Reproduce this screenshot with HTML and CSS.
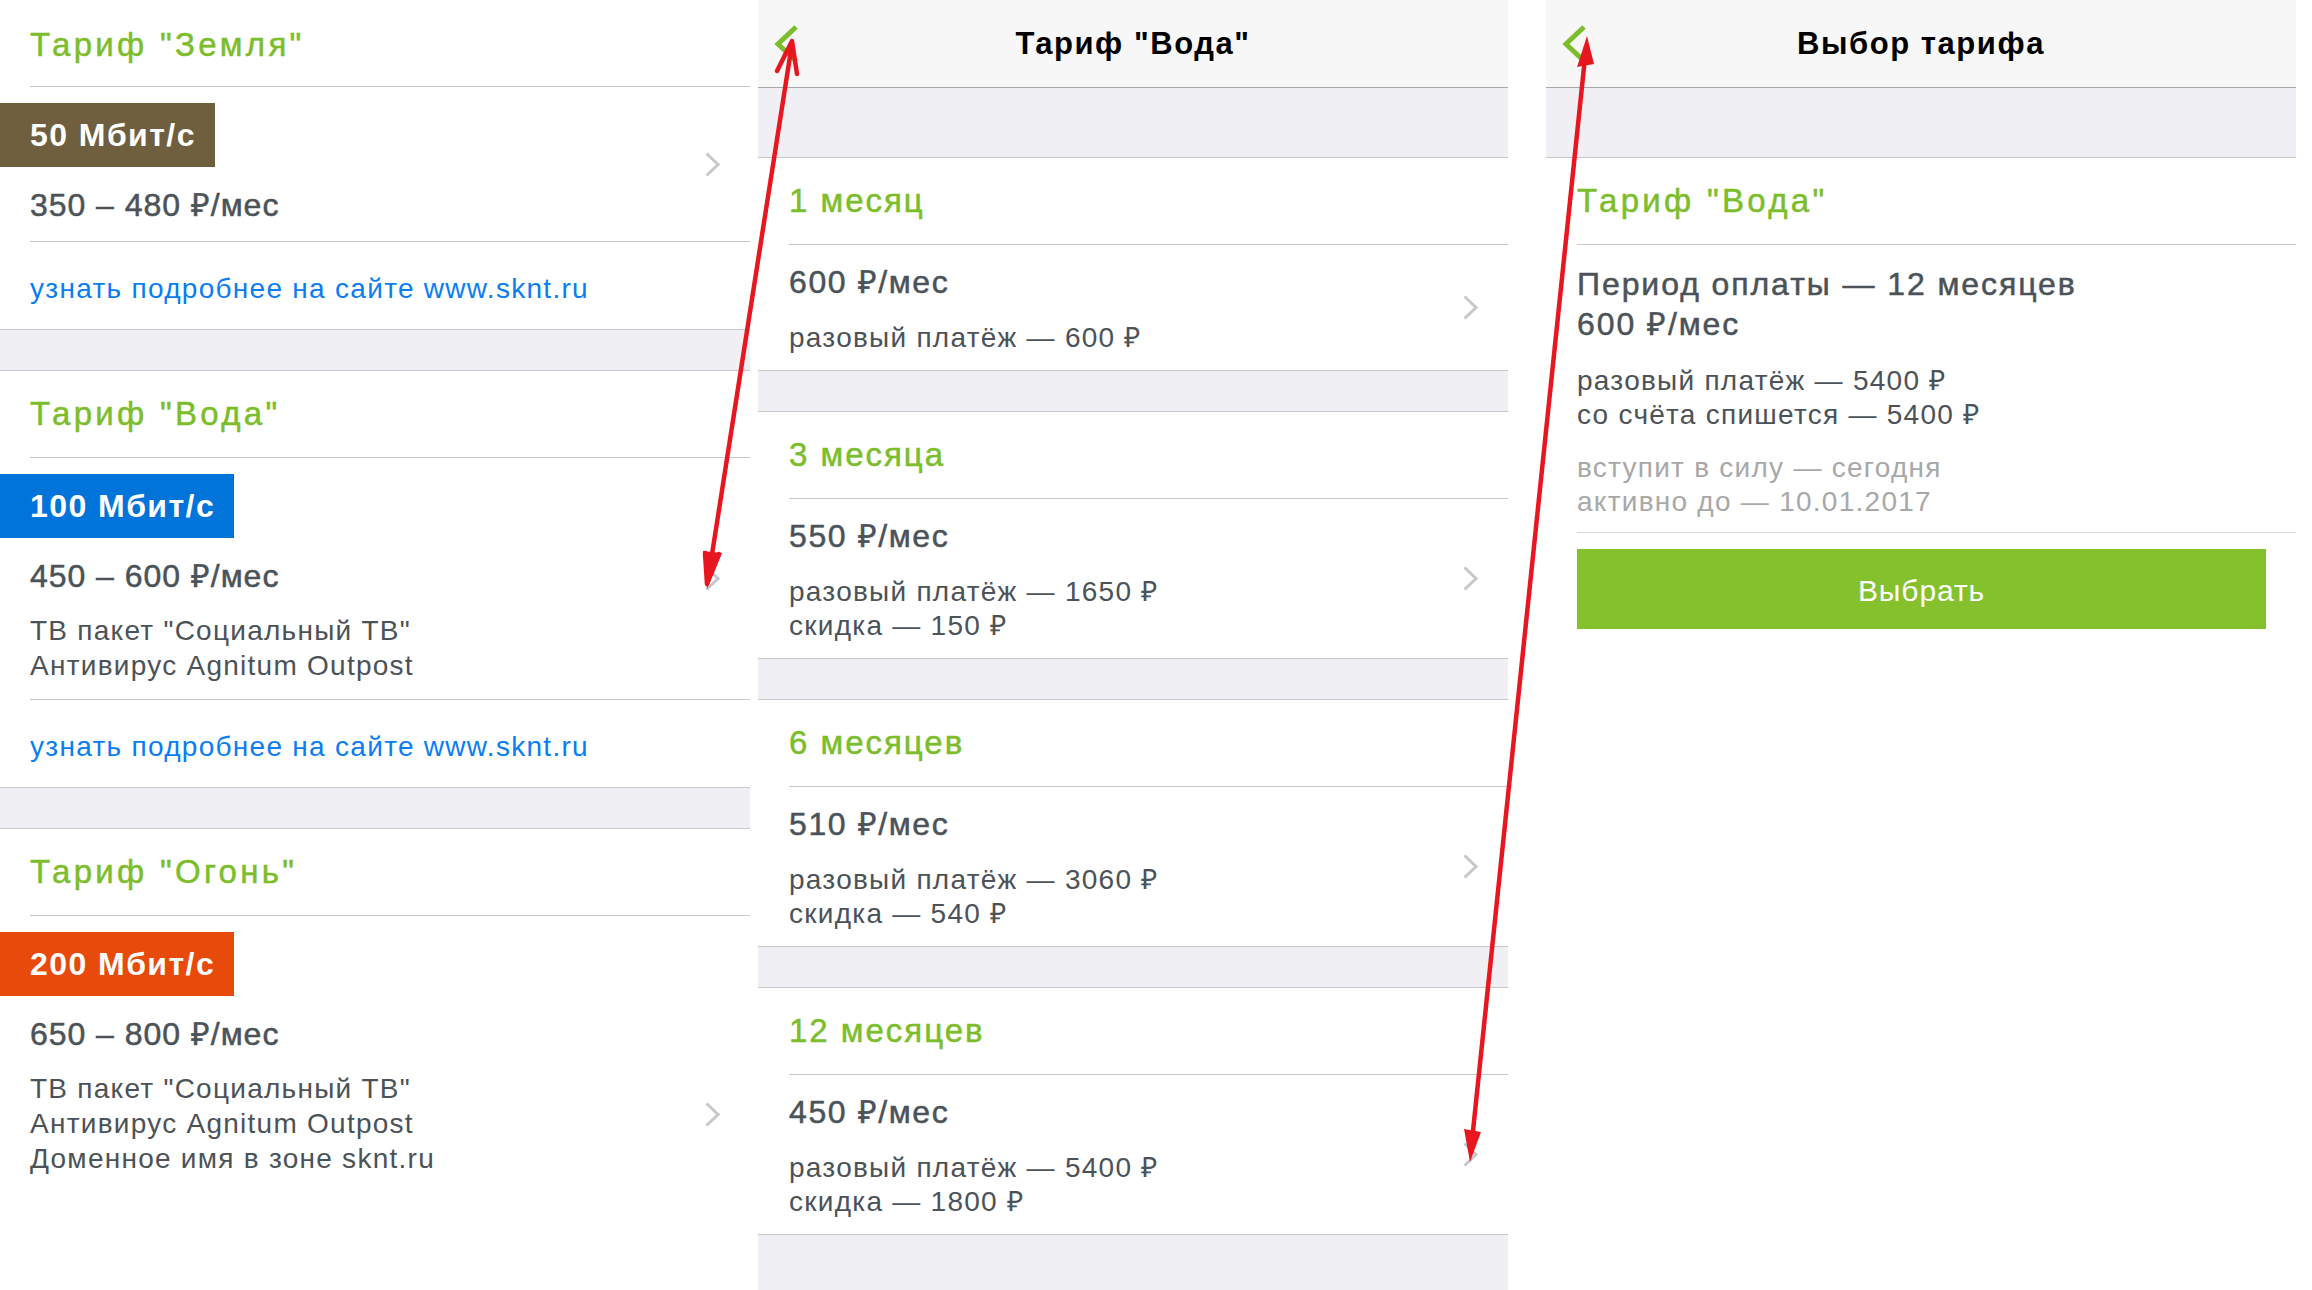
FILE: index.html
```html
<!DOCTYPE html>
<html lang="ru">
<head>
<meta charset="utf-8">
<title>Тарифы</title>
<link rel="stylesheet" href="styles.css">
</head>
<body>
<div class="screens">
  <!-- Screen 1: tariff list -->
  <section class="panel panel-list">
    <div class="group-title tariff-name tariff-first">Тариф "Земля"</div>
    <div class="sep"></div>
    <div class="row">
      <div class="row-body">
        <div class="badge badge-earth">50 Мбит/с</div>
        <div class="price">350 – 480 ₽/мес</div>
      </div>
      <svg class="chev" viewBox="0 0 15 25" width="15" height="25"><polyline points="1.5,1.5 13,12.5 1.5,23.5"/></svg>
    </div>
    <div class="sep"></div>
    <div class="link-row">узнать подробнее на сайте www.sknt.ru</div>
    <div class="band"></div>

    <div class="group-title tariff-name">Тариф "Вода"</div>
    <div class="sep"></div>
    <div class="row">
      <div class="row-body">
        <div class="badge badge-water">100 Мбит/с</div>
        <div class="price">450 – 600 ₽/мес</div>
        <div class="features">ТВ пакет "Социальный ТВ"<br>Антивирус Agnitum Outpost</div>
      </div>
      <svg class="chev" viewBox="0 0 15 25" width="15" height="25"><polyline points="1.5,1.5 13,12.5 1.5,23.5"/></svg>
    </div>
    <div class="sep"></div>
    <div class="link-row">узнать подробнее на сайте www.sknt.ru</div>
    <div class="band"></div>

    <div class="group-title tariff-name">Тариф "Огонь"</div>
    <div class="sep"></div>
    <div class="row row-tall">
      <div class="row-body">
        <div class="badge badge-fire">200 Мбит/с</div>
        <div class="price">650 – 800 ₽/мес</div>
        <div class="features">ТВ пакет "Социальный ТВ"<br>Антивирус Agnitum Outpost<br>Доменное имя в зоне sknt.ru</div>
      </div>
      <svg class="chev" viewBox="0 0 15 25" width="15" height="25"><polyline points="1.5,1.5 13,12.5 1.5,23.5"/></svg>
    </div>
  </section>

  <!-- Screen 2: payment periods -->
  <section class="panel panel-periods">
    <header class="navbar">
      <svg class="back" viewBox="0 0 26 40" width="26" height="40"><polyline points="22,3 4,20 22,37"/></svg>
      <h1 class="nav-title">Тариф "Вода"</h1>
      <span class="nav-spacer"></span>
    </header>
    <div class="band band-top"></div>

    <div class="group-title">1 месяц</div>
    <div class="sep"></div>
    <div class="row period-row">
      <div class="row-body">
        <div class="price">600 ₽/мес</div>
        <div class="small">разовый платёж — 600 ₽</div>
      </div>
      <svg class="chev" viewBox="0 0 15 25" width="15" height="25"><polyline points="1.5,1.5 13,12.5 1.5,23.5"/></svg>
    </div>
    <div class="band"></div>

    <div class="group-title">3 месяца</div>
    <div class="sep"></div>
    <div class="row period-row">
      <div class="row-body">
        <div class="price">550 ₽/мес</div>
        <div class="small">разовый платёж — 1650 ₽<br>скидка — 150 ₽</div>
      </div>
      <svg class="chev" viewBox="0 0 15 25" width="15" height="25"><polyline points="1.5,1.5 13,12.5 1.5,23.5"/></svg>
    </div>
    <div class="band"></div>

    <div class="group-title">6 месяцев</div>
    <div class="sep"></div>
    <div class="row period-row">
      <div class="row-body">
        <div class="price">510 ₽/мес</div>
        <div class="small">разовый платёж — 3060 ₽<br>скидка — 540 ₽</div>
      </div>
      <svg class="chev" viewBox="0 0 15 25" width="15" height="25"><polyline points="1.5,1.5 13,12.5 1.5,23.5"/></svg>
    </div>
    <div class="band"></div>

    <div class="group-title">12 месяцев</div>
    <div class="sep"></div>
    <div class="row period-row">
      <div class="row-body">
        <div class="price">450 ₽/мес</div>
        <div class="small">разовый платёж — 5400 ₽<br>скидка — 1800 ₽</div>
      </div>
      <svg class="chev" viewBox="0 0 15 25" width="15" height="25"><polyline points="1.5,1.5 13,12.5 1.5,23.5"/></svg>
    </div>
    <div class="band band-open"></div>
  </section>

  <!-- Screen 3: confirmation -->
  <section class="panel panel-confirm">
    <header class="navbar">
      <svg class="back" viewBox="0 0 26 40" width="26" height="40"><polyline points="22,3 4,20 22,37"/></svg>
      <h1 class="nav-title">Выбор тарифа</h1>
      <span class="nav-spacer"></span>
    </header>
    <div class="band band-top"></div>

    <div class="group-title tariff-name">Тариф "Вода"</div>
    <div class="sep"></div>
    <div class="summary">
      <div class="summary-main">Период оплаты — 12 месяцев<br>600 ₽/мес</div>
      <div class="small summary-pay">разовый платёж — 5400 ₽<br>со счёта спишется — 5400 ₽</div>
      <div class="small muted">вступит в силу — сегодня<br>активно до — 10.01.2017</div>
    </div>
    <div class="sep sep-light"></div>
    <div class="actions">
      <button class="btn-choose" type="button">Выбрать</button>
    </div>
  </section>
</div>

<svg class="annotations" width="2312" height="1290" viewBox="0 0 2312 1290">
  <g stroke="#e8161e" stroke-width="4.5" stroke-linecap="round" stroke-linejoin="round" fill="none">
    <path d="M791 50 L708 580"/>
    <path d="M777 71 L792 41 L797 74"/>
    <path d="M705 553 L707 584 L719 554"/>
    <path d="M1586 48 L1471 1150"/>
  </g>
  <g fill="#e8161e">
    <polygon points="1587,36 1577,67 1594,64"/>
    <polygon points="703,551 707,589 722,553"/>
    <polygon points="1464,1129 1470,1162 1481,1132"/>
  </g>
</svg>
</body>
</html>
```

FILE: styles.css
```css
* { box-sizing: border-box; }

html, body {
  margin: 0;
  padding: 0;
}

body {
  position: relative;
  width: 2312px;
  height: 1290px;
  overflow: hidden;
  background: #ffffff;
  font-family: "Liberation Sans", Arial, sans-serif;
  color: #4b5258;
}

.screens {
  display: flex;
  align-items: flex-start;
}

.panel {
  --inset: 30px;
  flex: none;
  width: 750px;
  height: 1290px;
  overflow: hidden;
  display: flex;
  flex-direction: column;
  background: #ffffff;
}

.panel-periods {
  --inset: 31px;
  margin-left: 8px;
  background: #efeff4;
}

.panel-confirm {
  --inset: 31px;
  margin-left: 38px;
}

/* nav bar */
.navbar {
  flex: none;
  height: 88px;
  display: grid;
  grid-template-columns: 1fr auto 1fr;
  align-items: center;
  background: #f7f7f7;
  border-bottom: 1px solid #a9a9ad;
}

.back {
  margin-left: 16px;
  fill: none;
  stroke: #7cbd2b;
  stroke-width: 5;
  stroke-linecap: butt;
  stroke-linejoin: miter;
}

.nav-title {
  margin: 0;
  font-size: 31px;
  font-weight: bold;
  color: #000;
  letter-spacing: 0.05em;
  line-height: 87px;
}

/* list blocks */
.group-title {
  flex: none;
  height: 86px;
  line-height: 86px;
  padding-left: var(--inset);
  font-size: 33px;
  color: #7cbd2b;
  -webkit-text-stroke: 0.5px #7cbd2b;
  letter-spacing: 0.06em;
  background: #fff;
  white-space: nowrap;
}

.tariff-name {
  letter-spacing: 0.1em;
}

.tariff-first {
  line-height: 89px;
}

.sep {
  flex: none;
  height: 1px;
  background: linear-gradient(to right, #fff var(--inset), #c8c7cc var(--inset));
}

.sep-light {
  background: linear-gradient(to right, #fff var(--inset), #d6d6da var(--inset));
}

.band {
  flex: none;
  height: 42px;
  background: #efeff4;
  border-top: 1px solid #c8c7cc;
  border-bottom: 1px solid #c8c7cc;
}

.band-top {
  height: 70px;
  border-top: 0;
}

.band-open {
  border-bottom: 0;
}

.row {
  flex: none;
  display: flex;
  background: #fff;
  padding-right: 30px;
}

.row-body {
  flex: 1;
  align-self: flex-start;
  padding: 16px 0 16px;
}

.chev {
  flex: none;
  align-self: center;
  fill: none;
  stroke: #c7c7cc;
  stroke-width: 3;
}

.row-tall {
  min-height: 396px;
}

.badge {
  display: inline-block;
  height: 64px;
  line-height: 64px;
  padding: 0 19px 0 30px;
  color: #fff;
  font-size: 32px;
  font-weight: bold;
  letter-spacing: 0.045em;
  white-space: nowrap;
}

.badge-earth { background: #6f5f3f; }
.badge-water { background: #0074d9; }
.badge-fire { background: #e84a0b; }

.price {
  margin-top: 18px;
  height: 40px;
  line-height: 40px;
  padding-left: var(--inset);
  font-size: 32px;
  color: #4b5258;
  -webkit-text-stroke: 0.5px #4b5258;
  letter-spacing: 0.05em;
  white-space: nowrap;
}

.panel-list .price {
  letter-spacing: 0.03em;
}

.features {
  margin-top: 17px;
  padding-left: var(--inset);
  font-size: 28px;
  line-height: 35px;
  letter-spacing: 0.045em;
}

.link-row {
  flex: none;
  height: 87px;
  line-height: 93px;
  padding-left: var(--inset);
  font-size: 28px;
  color: #0a7df2;
  letter-spacing: 0.046em;
  background: #fff;
  overflow: hidden;
}

/* periods */
.period-row .row-body {
  padding: 17px 0 15px;
}

.period-row .price {
  margin-top: 0;
}

.small {
  margin-top: 19px;
  padding-left: var(--inset);
  font-size: 28px;
  line-height: 34px;
  letter-spacing: 0.045em;
  color: #4b5258;
}

/* summary */
.summary {
  flex: none;
  padding: 19px 0 13px;
  background: #fff;
}

.summary-main {
  padding-left: var(--inset);
  font-size: 32px;
  line-height: 40px;
  color: #4b5258;
  -webkit-text-stroke: 0.5px #4b5258;
  letter-spacing: 0.06em;
}

.summary-pay {
  margin-top: 20px;
}

.muted {
  color: #a8a8a8;
}

.actions {
  padding: 16px 30px 0 var(--inset);
}

.btn-choose {
  display: block;
  width: 100%;
  height: 80px;
  border: 0;
  border-radius: 0;
  background: #84c12c;
  color: #fff;
  font-family: "Liberation Sans", Arial, sans-serif;
  font-size: 30px;
  line-height: 84px;
  padding: 0;
  letter-spacing: 0.03em;
  cursor: pointer;
}

/* annotation overlay (red arrows drawn over the screenshots) */
.annotations {
  position: absolute;
  left: 0;
  top: 0;
  pointer-events: none;
}
```
